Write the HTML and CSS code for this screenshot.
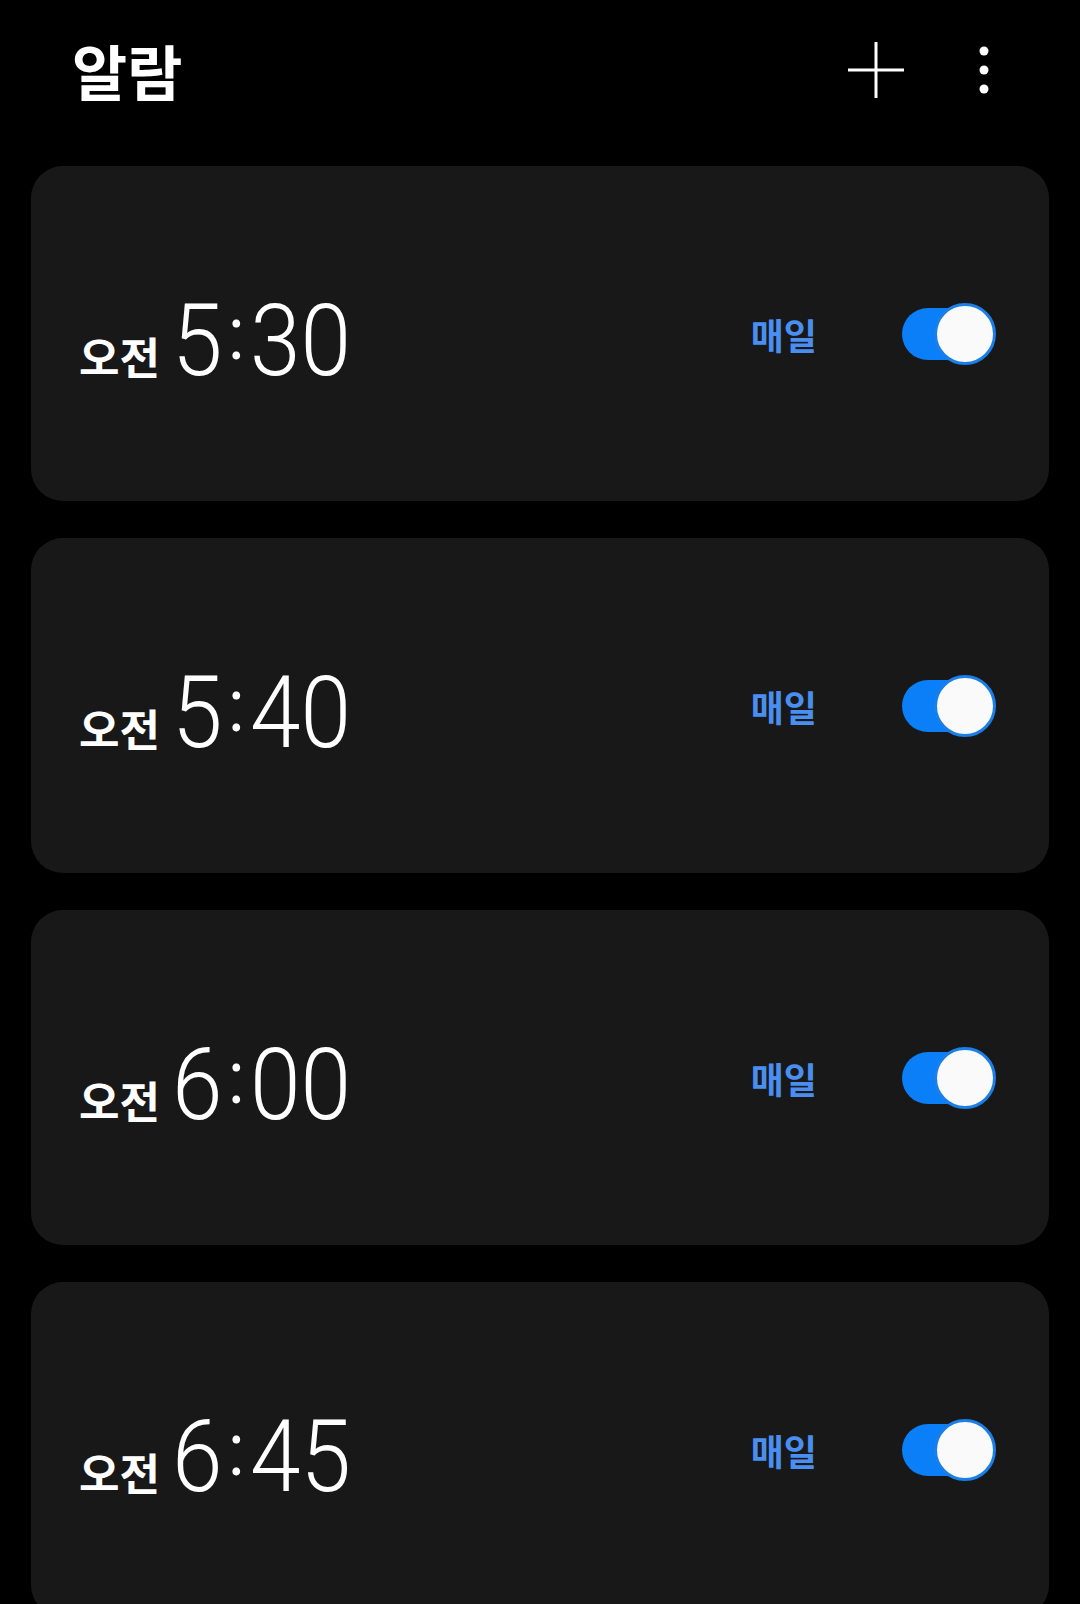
FILE: index.html
```html
<!DOCTYPE html>
<html lang="ko">
<head>
    <meta charset="utf-8">
    <title>알람</title>
    <link rel="stylesheet" href="styles.css">
</head>
<body>
    <header class="top-bar">
        <h1 class="title">알람</h1>
        <button class="icon-btn add-btn" aria-label="알람 추가">
            <svg width="56" height="56" viewBox="0 0 56 56">
                <path d="M28 0 V56 M0 28 H56" stroke="#fff" stroke-width="3" fill="none"/>
            </svg>
        </button>
        <button class="icon-btn more-btn" aria-label="더보기">
            <svg width="20" height="56" viewBox="0 0 20 56">
                <circle cx="10" cy="9" r="4.5" fill="#fff"/>
                <circle cx="10" cy="28" r="4.5" fill="#fff"/>
                <circle cx="10" cy="47" r="4.5" fill="#fff"/>
            </svg>
        </button>
    </header>

    <main class="alarm-list">
        <div class="alarm-card">
            <div class="alarm-time">
                <span class="ampm">오전</span>
                <span class="clock">5<span class="colon">:</span>30</span>
            </div>
            <div class="alarm-right">
                <span class="repeat">매일</span>
                <div class="toggle on"><span class="track"></span><span class="knob"></span></div>
            </div>
        </div>

        <div class="alarm-card">
            <div class="alarm-time">
                <span class="ampm">오전</span>
                <span class="clock">5<span class="colon">:</span>40</span>
            </div>
            <div class="alarm-right">
                <span class="repeat">매일</span>
                <div class="toggle on"><span class="track"></span><span class="knob"></span></div>
            </div>
        </div>

        <div class="alarm-card">
            <div class="alarm-time">
                <span class="ampm">오전</span>
                <span class="clock">6<span class="colon">:</span>00</span>
            </div>
            <div class="alarm-right">
                <span class="repeat">매일</span>
                <div class="toggle on"><span class="track"></span><span class="knob"></span></div>
            </div>
        </div>

        <div class="alarm-card">
            <div class="alarm-time">
                <span class="ampm">오전</span>
                <span class="clock">6<span class="colon">:</span>45</span>
            </div>
            <div class="alarm-right">
                <span class="repeat">매일</span>
                <div class="toggle on"><span class="track"></span><span class="knob"></span></div>
            </div>
        </div>
    </main>
</body>
</html>
```

FILE: styles.css
```css
html, body {
    margin: 0;
    height: 1604px;
    overflow: hidden;
}

body {
    background-color: #000;
    color: #fff;
    font-family: "Noto Sans CJK KR", "Noto Sans", sans-serif;
}

.top-bar {
    display: flex;
    align-items: center;
    height: 140px;
    padding: 0 86px 0 72px;
}

.title {
    margin: 0 auto 0 0;
    font-size: 60px;
    font-weight: 700;
    line-height: 1;
}

.icon-btn {
    display: flex;
    padding: 0;
    border: none;
    background: none;
    cursor: pointer;
}

.add-btn {
    margin-right: 70px;
}

.alarm-list {
    display: flex;
    flex-direction: column;
    gap: 37px;
    padding: 26px 31px 0 31px;
}

.alarm-card {
    display: flex;
    align-items: center;
    flex-shrink: 0;
    height: 335px;
    padding: 0 53px 0 48px;
    background-color: #181818;
    border-radius: 32px;
}

.alarm-time {
    display: flex;
    align-items: baseline;
    margin-top: 14px;
}

.ampm {
    font-size: 44px;
    font-weight: 700;
    margin-right: 12px;
}

.clock {
    display: inline-block;
    font-family: Roboto, "Liberation Sans", sans-serif;
    font-weight: 300;
    font-size: 100px;
    line-height: 1;
    transform: scaleX(0.91);
    transform-origin: left center;
}

.colon {
    font-size: 75px;
    font-weight: 400;
    vertical-align: 16px;
    margin: 0 6px;
}

.alarm-right {
    display: flex;
    align-items: center;
    margin-left: auto;
}

.repeat {
    color: #4a8ff0;
    font-size: 36px;
    font-weight: 700;
    margin-right: 85px;
}

.toggle {
    position: relative;
    width: 94px;
    height: 62px;
}

.toggle .track {
    position: absolute;
    left: 0;
    top: 5px;
    width: 84px;
    height: 52px;
    border-radius: 26px;
    background-color: #0a7ff7;
}

.toggle .knob {
    position: absolute;
    right: 0;
    top: 0;
    width: 56px;
    height: 56px;
    border: 3px solid #1a7fe8;
    border-radius: 50%;
    background-color: #fafafa;
}
```
